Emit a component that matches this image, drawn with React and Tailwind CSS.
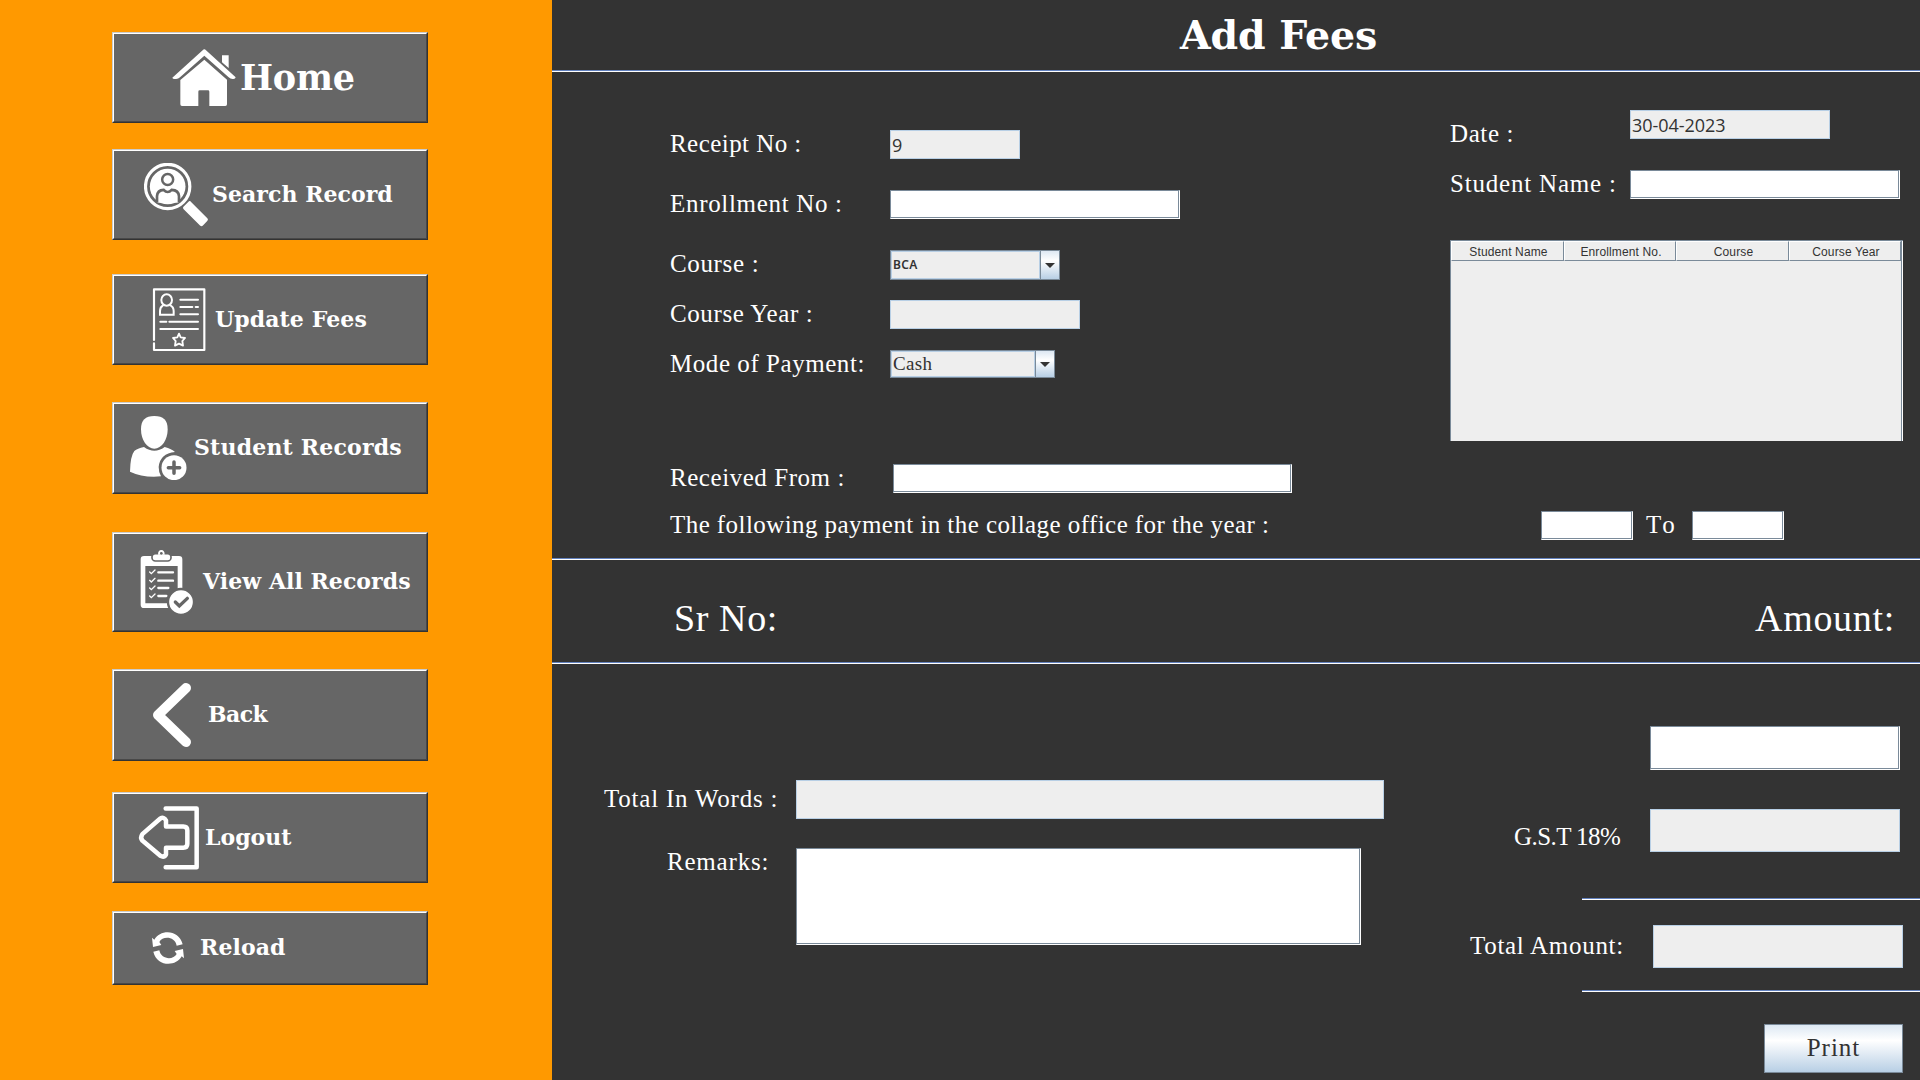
import React from "react";

const GRAY = "#666666";

function HomeIcon() {
  return (
    <svg className="size-16 shrink-0" viewBox="216 77 192 192" fill="#fff">
      <path d="M217 172L308 90Q313 84 318 90L407 171Q406 177 398 176Q391 176 386 171L313 106L240 171Q234 177 226 176Q218 177 217 172Z" />
      <path d="M366 105H386V143L366 126Z" />
      <path d="M313 118L381 178V252Q381 257 376 257H328V214Q328 210 324 210H299Q295 210 295 214V257H246Q241 257 241 252V179Z" />
    </svg>
  );
}

function SearchIcon() {
  return (
    <svg className="size-16 shrink-0" viewBox="132 427.5 192 192" fill="#fff">
      <circle cx="203" cy="498" r="66.5" fill="none" stroke="#fff" strokeWidth="9.5" />
      <circle cx="203" cy="498" r="53.5" />
      <circle cx="203" cy="477" r="16.5" stroke={GRAY} strokeWidth="7.5" />
      <path d="M171 547V527Q172 509 191 508Q203 521 215 508Q236 509 237 527V547" stroke={GRAY} strokeWidth="8" />
      <path d="M267 542Q271 541 274 545L322 593Q326 598 321 602L308 616Q304 619 300 615L251 566Q247 562 251 558Z" />
    </svg>
  );
}

function UpdateIcon() {
  return (
    <svg className="size-16 shrink-0" viewBox="141 83 192 192" fill="none" stroke="#fff" strokeWidth="6" strokeLinecap="round">
      <path d="M162 239V87H313V269H162V249" strokeWidth="6.5" strokeLinejoin="round" />
      <path d="M241 118H294M241 140H277M287 140H294M241 162H294M181 184H199M208 184H294M181 206H294" />
      <ellipse cx="200" cy="119" rx="16" ry="17" />
      <path d="M189 135Q180 140 180 152V163H221V152Q221 140 211 135" />
      <path d="M237 220L242 231L255 233L247 242L249 256L237 250L225 256L227 242L219 233L232 231Z" strokeWidth="5.5" strokeLinejoin="round" />
    </svg>
  );
}

function StudentIcon() {
  return (
    <svg className="size-16 shrink-0" viewBox="78 468 192 192" fill="#fff">
      <path d="M163 468C190 468 203 480 203 508C203 540 185 566 163 566C141 566 123 540 123 508C123 480 136 468 163 468Z" />
      <path d="M132 561Q163 584 194 561Q215 567 225 576Q180 580 176 621Q176 638 183 649Q130 654 90 635Q91 588 103 573Q112 566 132 561Z" />
      <circle cx="222" cy="623" r="37.5" />
      <path d="M222 606V640M205 623H239" stroke={GRAY} strokeWidth="10.5" strokeLinecap="round" />
    </svg>
  );
}

function ViewIcon() {
  return (
    <svg className="size-16 shrink-0" viewBox="102 90 192 192" fill="#fff">
      <path fillRule="evenodd" d="M132 108H237Q247 108 247 118V264H132Q122 264 122 254V118Q122 108 132 108ZM136 138V250H233V138Z" />
      <rect x="156" y="101" width="57" height="22" rx="10" stroke={GRAY} strokeWidth="5" />
      <path d="M174 104Q174 90 184 90Q194 90 194 104Z" />
      <circle cx="184" cy="100" r="4" fill={GRAY} />
      <g fill="none" stroke="#fff" strokeWidth="4" strokeLinecap="round">
        <path d="M149 156L154 161L165 150M149 181L154 186L165 175M149 204L154 209L165 198M149 228L154 233L165 222" />
        <path d="M175 157H219M175 182H219M175 204H205M175 228H199" strokeWidth="7" />
      </g>
      <circle cx="243" cy="246" r="39" stroke={GRAY} strokeWidth="7" />
      <path d="M226 246L238 258L262 235" fill="none" stroke={GRAY} strokeWidth="10" strokeLinecap="round" />
    </svg>
  );
}

function BackIcon() {
  return (
    <svg className="size-16 shrink-0" viewBox="120 489 192 192" fill="none" stroke="#fff" strokeWidth="30" strokeLinecap="round" strokeLinejoin="round">
      <path d="M258 504L174 585L258 666" />
    </svg>
  );
}

function LogoutIcon() {
  return (
    <svg className="size-16 shrink-0" viewBox="111 76.5 192 192" fill="none" stroke="#fff" strokeWidth="13.5" strokeLinecap="round" strokeLinejoin="round">
      <path d="M197 84H290V260H197" />
      <path d="M198 138H250Q262 138 262 150V190Q262 202 250 202H198V222Q192 232 181 226L127 180Q120 171 127 161L181 114Q192 108 198 120Z" />
    </svg>
  );
}

function ReloadIcon() {
  return (
    <svg className="size-8 shrink-0" viewBox="156 456 96 96" fill="#fff">
      <path d="M156 473L163 479C180 447 237 447 248 493L230 497C225 469 188 467 178 486L184 495L159 501Z" />
      <path d="M252 535L245 529C228 561 171 561 160 515L178 511C183 539 220 541 230 522L224 513L249 507Z" />
    </svg>
  );
}

const NAV = [
  { label: "Home", Icon: HomeIcon, box: "mt-8 h-[91px]", inner: "pl-[58px] gap-1", text: "pt-0.5 text-[35px] tracking-[-0.2px]" },
  { label: "Search Record", Icon: SearchIcon, box: "mt-[26px] h-[91px]", inner: "pl-[30px] gap-1", text: "pb-px text-[22px] tracking-[0.05px]" },
  { label: "Update Fees", Icon: UpdateIcon, box: "mt-[34px] h-[91px]", inner: "pl-[33px] gap-1", text: "pb-px text-[22px] tracking-[0.1px]" },
  { label: "Student Records", Icon: StudentIcon, box: "mt-[37px] h-[92px]", inner: "pl-3 gap-1", text: "pb-px text-[22px] tracking-[0.2px]" },
  { label: "View All Records", Icon: ViewIcon, box: "mt-[38px] h-[100px]", inner: "pl-5 gap-[5px]", text: "pb-px text-[22px] tracking-[0.05px]" },
  { label: "Back", Icon: BackIcon, box: "mt-[37px] h-[92px]", inner: "pl-[26px] gap-1", text: "pb-px text-[22px] tracking-[-0.6px]" },
  { label: "Logout", Icon: LogoutIcon, box: "mt-[31px] h-[91px]", inner: "pl-[23px] gap-1", text: "pb-px text-[22px]" },
  { label: "Reload", Icon: ReloadIcon, box: "mt-7 h-[74px]", inner: "pl-[38px] gap-4", text: "pb-px text-[22px] tracking-[0.1px]" },
];

function NavButton({ label, Icon, box, inner, text }) {
  return (
    <button className={`${box} w-full shrink-0 border border-t-[#cccccc] border-l-[#cccccc] border-r-[#333333] border-b-[#333333]`}>
      <span className={`${inner} flex h-full items-center border border-t-white border-l-white border-r-[#484848] border-b-[#484848] bg-[#666666]`}>
        <Icon />
        <span className={`${text} whitespace-nowrap font-['DejaVu_Serif',serif] font-bold text-white`}>{label}</span>
      </span>
    </button>
  );
}

function Label({ className = "", children }) {
  return (
    <span className={`${className} block shrink-0 whitespace-nowrap text-[25px] leading-[28px] text-white`}>{children}</span>
  );
}

function TextField({ className = "" }) {
  return (
    <div className={`${className} shrink-0 border border-t-[#7a8a99] border-l-[#7a8a99] border-r-white border-b-white bg-white`}>
      <input className="block h-full w-full border-r border-b border-[#7a8a99] bg-white outline-none" />
    </div>
  );
}

function ReadOnlyField({ className = "", children }) {
  return (
    <div className={`${className} flex shrink-0 items-center border border-[#b8cfe5] bg-[#eeeeee] pl-px pt-0.5 font-['Open_Sans',sans-serif] text-[18px] tracking-[-0.05px] text-[#333333]`}>
      {children}
    </div>
  );
}

function Combo({ className = "", textClass, children }) {
  return (
    <div className={`${className} flex shrink-0 border border-[#7a8a99]`}>
      <div className="flex flex-1 items-center border border-[#b8cfe5] bg-[#eeeeee] pl-px text-[#333333]">
        <span className={textClass}>{children}</span>
      </div>
      <div className="flex w-[19px] items-center justify-center border-l border-[#7a8a99] bg-linear-[180deg,#dde8f3_0%,#ffffff_35%,#b8cfe5_100%]">
        <svg className="mt-px h-[5px] w-[10px]" viewBox="0 0 10 5">
          <path d="M0 0H10L5 5Z" fill="#333333" />
        </svg>
      </div>
    </div>
  );
}

function Separator({ className = "w-full" }) {
  return <div className={`${className} h-0.5 shrink-0 border-t border-[#6382bf] bg-white`} />;
}

export default function App() {
  return (
    <div className="flex h-[1080px] w-[1920px] overflow-hidden bg-[#333333] font-['Liberation_Serif',serif]">
      <aside className="flex w-[552px] shrink-0 flex-col bg-[#ff9900] pl-[112px] pr-[124px]">
        {NAV.map((item) => (
          <NavButton key={item.label} {...item} />
        ))}
      </aside>

      <main className="flex min-w-0 flex-1 flex-col">
        <header className="flex h-[70px] shrink-0 items-center pl-[628px] pt-0.5">
          <h1 className="font-['DejaVu_Serif',serif] text-[39.5px] leading-none font-bold tracking-[-0.1px] whitespace-nowrap text-white">Add Fees</h1>
        </header>
        <Separator />

        <section className="flex h-[486px] shrink-0 flex-col">
          <div className="flex h-[392px]">
            <div className="w-[898px] pl-[118px] pt-[58px]">
              <div className="flex">
                <Label className="w-[220px] tracking-[0.45px]">Receipt No :</Label>
                <ReadOnlyField className="h-[29px] w-[130px]">9</ReadOnlyField>
              </div>
              <div className="mt-[31px] flex">
                <Label className="w-[220px] tracking-[0.68px]">Enrollment No :</Label>
                <TextField className="h-[29px] w-[290px]" />
              </div>
              <div className="mt-[31px] flex">
                <Label className="w-[220px] tracking-[0.65px]">Course :</Label>
                <Combo className="h-[30px] w-[170px]" textClass="font-['Noto_Sans',sans-serif] text-[12px] font-semibold tracking-[0.4px]">BCA</Combo>
              </div>
              <div className="mt-5 flex">
                <Label className="w-[220px] tracking-[0.6px]">Course Year :</Label>
                <ReadOnlyField className="h-[29px] w-[190px]" />
              </div>
              <div className="mt-[21px] flex">
                <Label className="w-[220px] tracking-[0.55px]">Mode of Payment:</Label>
                <Combo className="h-[28px] w-[165px]" textClass="text-[19px] tracking-[0.3px]">Cash</Combo>
              </div>
            </div>

            <div className="w-[453px] pt-[38px]">
              <div className="flex">
                <Label className="mt-2.5 w-[180px] tracking-[0.6px]">Date :</Label>
                <ReadOnlyField className="h-[29px] w-[200px]">30-04-2023</ReadOnlyField>
              </div>
              <div className="mt-[22px] flex">
                <Label className="w-[180px] tracking-[0.8px]">Student Name :</Label>
                <TextField className="h-[29px] w-[270px]" />
              </div>
              <div className="mt-[41px] h-[201px] border-t border-l border-[#7a8a99]">
                <div className="h-full border-r border-white">
                  <div className="h-full border-r border-[#7a8a99] bg-[#eeeeee]">
                    <div className="grid h-5 grid-cols-[113px_112px_113px_1fr]">
                      {["Student Name", "Enrollment No.", "Course", "Course Year"].map((name) => (
                        <div key={name} className="border border-t-white border-l-white border-r-[#7a8a99] border-b-[#7a8a99] pt-0.5 pl-0.5 text-center font-['Liberation_Sans',sans-serif] text-[12px] leading-4 tracking-[0.13px] text-[#333333]">
                          {name}
                        </div>
                      ))}
                    </div>
                  </div>
                </div>
              </div>
            </div>
          </div>

          <div className="flex pl-[118px]">
            <Label className="w-[223px] tracking-[0.55px]">Received From :</Label>
            <TextField className="h-[29px] w-[399px]" />
          </div>
          <div className="mt-[18px] flex pl-[118px]">
            <Label className="w-[871px] tracking-[0.43px]">The following payment in the collage office for the year :</Label>
            <TextField className="h-[29px] w-[92px]" />
            <Label className="w-[59px] pl-[13px] tracking-[0.9px] [font-kerning:none]">To</Label>
            <TextField className="h-[29px] w-[92px]" />
          </div>
        </section>
        <Separator />

        <section className="flex h-[102px] shrink-0 justify-between pl-[122px] pr-[25px] pt-[38px] text-[38px] leading-[40px] text-white">
          <span className="tracking-[0.6px]">Sr No:</span>
          <span className="tracking-[0.7px]">Amount:</span>
        </section>
        <Separator />

        <section className="flex flex-1 justify-between">
          <div className="pl-[52px] pt-[116px]">
            <div className="flex">
              <Label className="mt-[5px] w-[192px] tracking-[0.78px]">Total In Words :</Label>
              <ReadOnlyField className="h-[39px] w-[588px]" />
            </div>
            <div className="mt-[29px] flex">
              <Label className="w-[192px] pl-[63px] tracking-[0.8px]">Remarks:</Label>
              <TextField className="h-[97px] w-[565px]" />
            </div>
          </div>

          <div className="flex flex-col items-end pt-[62px]">
            <TextField className="mr-5 h-[44px] w-[250px]" />
            <div className="mr-5 mt-[39px] flex">
              <Label className="mt-3.5 w-[136px] tracking-[-0.58px]">G.S.T 18%</Label>
              <ReadOnlyField className="h-[43px] w-[250px]" />
            </div>
            <Separator className="mt-[46px] w-[338px]" />
            <div className="mr-[17px] mt-[25px] flex">
              <Label className="mt-[7px] w-[183px] tracking-[0.7px]">Total Amount:</Label>
              <ReadOnlyField className="h-[43px] w-[250px]" />
            </div>
            <Separator className="mt-[22px] w-[338px]" />
            <button className="mr-[17px] mt-8 h-[49px] w-[139px] border border-[#7a8a99] bg-linear-[180deg,#dde8f3_0%,#ffffff_33%,#b8cfe5_100%] pb-0.5 text-[25px] leading-none tracking-[1px] text-[#333333]">
              Print
            </button>
          </div>
        </section>
      </main>
    </div>
  );
}
